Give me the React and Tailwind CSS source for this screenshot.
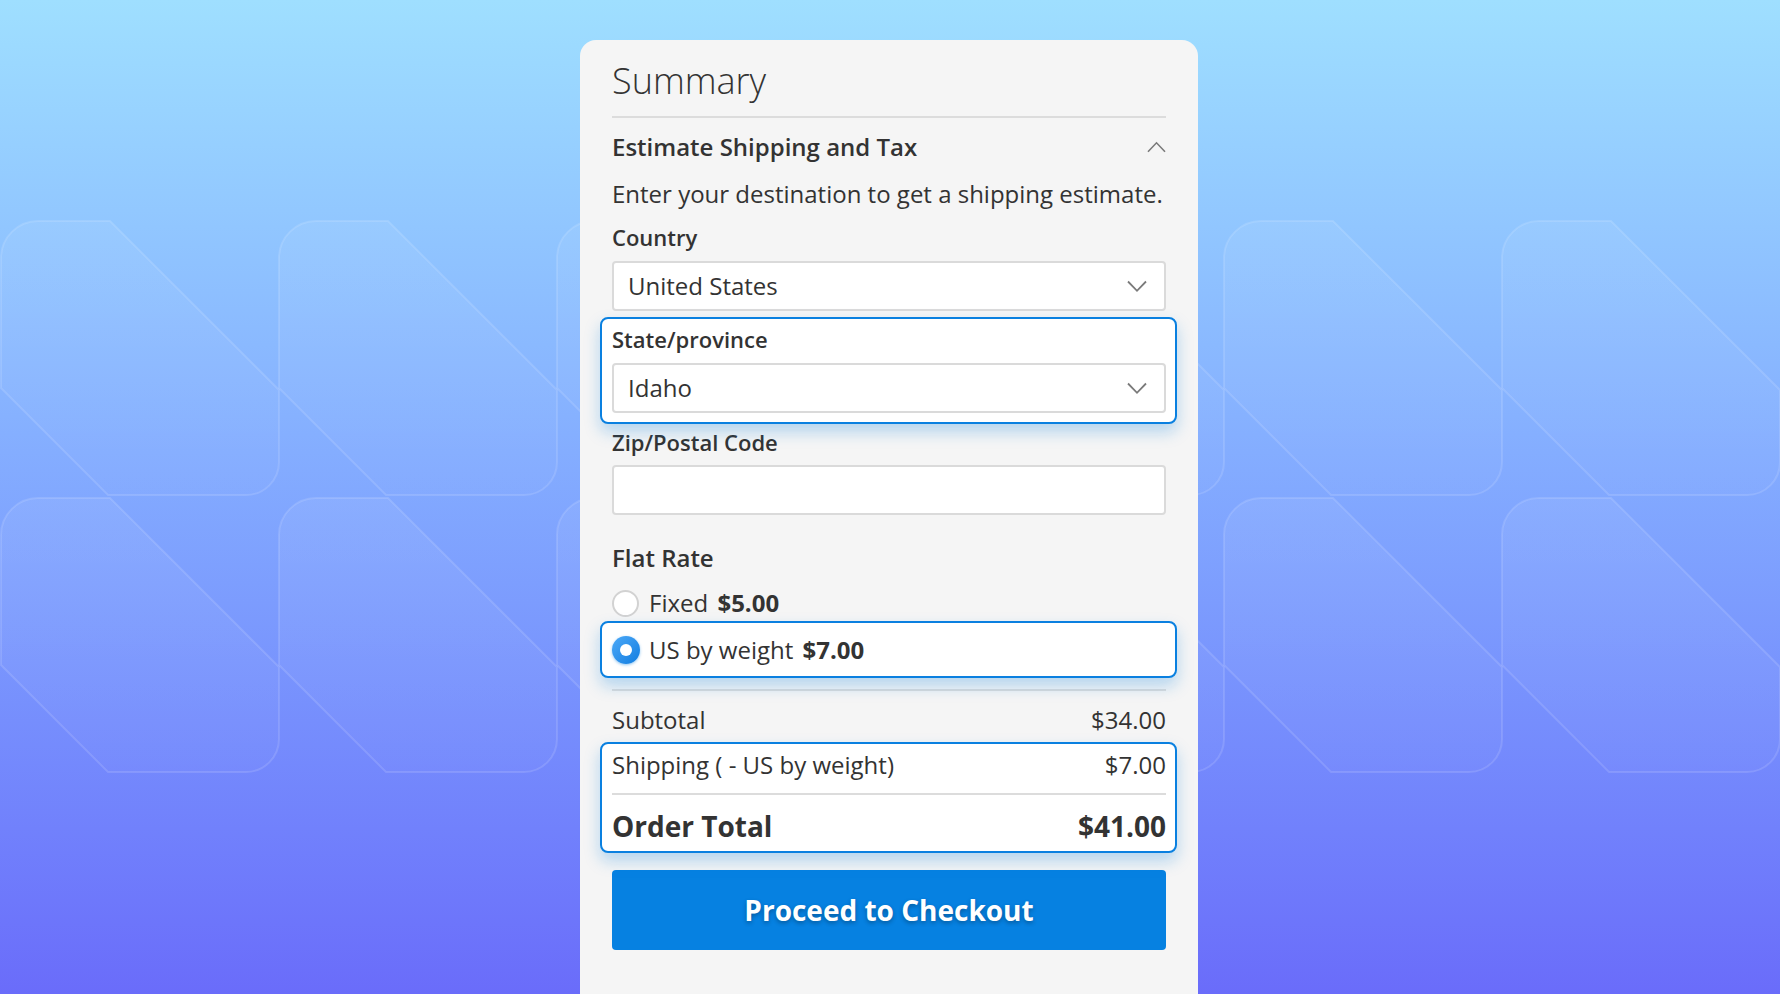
import React from "react";

const TILE =
  "M0,37 A37,37 0 0 1 37,0 L109,0 L278,169 L278,241 A33,33 0 0 1 245,274 L107,274 L0,167 Z";

function Pattern() {
  const xs = [1, 279, 557, 946, 1224, 1502];
  const ys = [221, 498];
  return (
    <svg
      className="absolute inset-0 h-full w-full"
      viewBox="0 0 1780 994"
      preserveAspectRatio="none"
      aria-hidden="true"
    >
      <defs>
        <linearGradient id="tileFill" x1="0" y1="0" x2="0" y2="1">
          <stop offset="0" stopColor="#ffffff" stopOpacity="0.07" />
          <stop offset="1" stopColor="#ffffff" stopOpacity="0.02" />
        </linearGradient>
      </defs>
      {ys.map((y) =>
        xs.map((x) => (
          <path
            key={`${x}-${y}`}
            d={TILE}
            transform={`translate(${x} ${y})`}
            fill="url(#tileFill)"
            stroke="#ffffff"
            strokeOpacity="0.13"
            strokeWidth="2"
          />
        ))
      )}
    </svg>
  );
}

function ChevronDown() {
  return (
    <svg width="20" height="13" viewBox="0 0 20 13" fill="none">
      <path d="M1 1.5 L10 10.8 L19 1.5" stroke="#7a7a7a" strokeWidth="1.8" />
    </svg>
  );
}

function ChevronUp() {
  return (
    <svg width="19" height="12" viewBox="0 0 19 12" fill="none">
      <path d="M1 10.8 L9.5 1.8 L18 10.8" stroke="#7a7a7a" strokeWidth="1.6" />
    </svg>
  );
}

function Select({ value, className = "" }) {
  return (
    <div
      className={`flex h-[50px] items-center justify-between rounded-[4px] border-2 border-[#dadada] bg-white pl-[14px] pr-[17px] ${className}`}
    >
      <span className="text-[24px] leading-[32px]">{value}</span>
      <ChevronDown />
    </div>
  );
}

export default function App() {
  return (
    <div className="relative h-[994px] w-full overflow-hidden bg-linear-to-b from-[#9fdfff] to-[#6a6cfa] font-['Open_Sans',sans-serif] text-[#333333]">
      <Pattern />
      <div className="relative ml-[580px] mt-[40px] h-[1000px] w-[618px] rounded-[16px] bg-[#f5f5f5] px-[32px] pt-[23px]">
        <div className="text-[36px] font-light leading-[36px]">Summary</div>
        <div className="mt-[17px] h-[2px] bg-[#dcdcdc]" />

        <div className="mt-[13px] flex h-[32px] items-center justify-between">
          <span className="text-[24px] font-semibold leading-[32px]">
            Estimate Shipping and Tax
          </span>
          <ChevronUp />
        </div>
        <p className="mt-[15px] text-[24px] leading-[32px]">
          Enter your destination to get a shipping estimate.
        </p>

        <div className="mt-[12px] text-[22px] font-semibold leading-[30px]">
          Country
        </div>
        <Select className="mt-[9px]" value="United States" />

        <div className="relative -ml-[12px] -mr-[11px] mt-[6px] rounded-[8px] border-2 border-[#0a80e0] bg-white pb-[9px] pl-[10px] pr-[9px] pt-[5px] shadow-[0_8px_16px_rgba(10,128,224,0.28)]">
          <div className="text-[22px] font-semibold leading-[30px]">
            State/province
          </div>
          <Select className="mt-[9px]" value="Idaho" />
        </div>

        <div className="mt-[3px] text-[22px] font-semibold leading-[30px]">
          Zip/Postal Code
        </div>
        <div className="mt-[8px] h-[50px] rounded-[4px] border-2 border-[#dadada] bg-white" />

        <div className="mt-[27px] text-[24px] font-semibold leading-[32px]">
          Flat Rate
        </div>
        <div className="mt-[13px] flex h-[32px] items-center gap-[10px]">
          <span className="h-[27px] w-[27px] shrink-0 rounded-full border-2 border-[#d2d2d2] bg-white" />
          <span className="text-[24px] leading-[32px]">
            Fixed <span className="ml-[3px] font-bold">$5.00</span>
          </span>
        </div>

        <div className="relative -ml-[12px] -mr-[11px] mt-[2px] rounded-[8px] border-2 border-[#0a80e0] bg-white pb-[10px] pl-[10px] pr-[9px] pt-[11px] shadow-[0_8px_16px_rgba(10,128,224,0.28)]">
          <div className="flex h-[32px] items-center gap-[9px]">
            <span className="flex h-[28px] w-[28px] shrink-0 items-center justify-center rounded-full bg-linear-to-br from-[#4aa9f8] to-[#0a7de0] shadow-[0_1px_3px_rgba(10,128,224,0.45)]">
              <span className="h-[12px] w-[12px] rounded-full bg-white" />
            </span>
            <span className="text-[24px] leading-[32px]">
              US by weight <span className="ml-[3px] font-bold">$7.00</span>
            </span>
          </div>
        </div>

        <div className="mt-[11px] h-[2px] bg-[#dcdcdc]" />

        <div className="mt-[13px] flex h-[32px] items-center justify-between text-[24px] leading-[32px]">
          <span>Subtotal</span>
          <span>$34.00</span>
        </div>

        <div className="relative -ml-[12px] -mr-[11px] mt-[6px] rounded-[8px] border-2 border-[#0a80e0] bg-white pb-[7px] pl-[10px] pr-[9px] pt-[5px] shadow-[0_8px_16px_rgba(10,128,224,0.28)]">
          <div className="flex h-[32px] items-center justify-between text-[24px] leading-[32px]">
            <span>Shipping ( - US by weight)</span>
            <span>$7.00</span>
          </div>
          <div className="mt-[12px] h-[2px] bg-[#dcdcdc]" />
          <div className="mt-[13px] flex h-[36px] items-center justify-between text-[28px] font-bold leading-[36px]">
            <span>Order Total</span>
            <span>$41.00</span>
          </div>
        </div>

        <button className="mt-[17px] flex h-[80px] w-full items-center justify-center rounded-[4px] bg-[#0681e1] text-[28px] font-bold leading-[36px] text-white [text-shadow:0_2px_4px_rgba(0,0,0,0.3)]">
          Proceed to Checkout
        </button>
      </div>
    </div>
  );
}
